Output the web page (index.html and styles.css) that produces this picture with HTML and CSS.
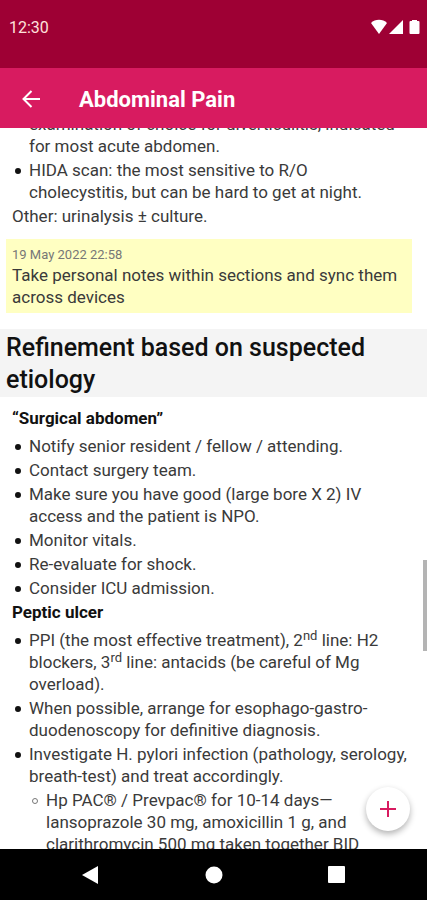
FILE: index.html
```html
<!DOCTYPE html>
<html lang="en">
<head>
<meta charset="utf-8">
<meta name="viewport" content="width=device-width, initial-scale=1">
<title>Abdominal Pain</title>
<link rel="stylesheet" href="styles.css">
</head>
<body>
<div class="status">
  <span>12:30</span>
  <svg width="49" height="16" viewBox="0 0 49 16" fill="#fff" aria-hidden="true">
    <path d="M0 4C4-.3 12-.3 16 4L8 15Z"/>
    <path d="M18 15 32 1V15Z"/>
    <path d="M41 1h5v1h1.500q1 0 1 1v11q0 1-1 1h-8q-1 0-1-1V3q0-1 1-1H41Z"/>
  </svg>
</div>
<header class="appbar">
  <button class="back" aria-label="Back">
    <svg width="20" height="20" viewBox="0 0 20 20" fill="none" stroke="#fff" stroke-width="2" aria-hidden="true"><path d="M19 9H3M10.500 1 2.500 9l8 8"/></svg>
  </button>
  <h1 class="title">Abdominal Pain</h1>
</header>
<main class="page">
  <div class="scroll">
    <div class="section section-first">
      <ul class="list">
        <li class="item item-continued">examination of choice for diverticulitis, indicated for most acute abdomen.</li>
        <li class="item">HIDA scan: the most sensitive to R/O cholecystitis, but can be hard to get at night.</li>
      </ul>
      <p class="text">Other: urinalysis ± culture.</p>
    </div>
    <aside class="note">
      <time class="date">19 May 2022 22:58</time>
      <p class="text">Take personal notes within sections and sync them across devices</p>
    </aside>
    <h2 class="heading">Refinement based on suspected etiology</h2>
    <div class="section">
      <h3 class="subheading">“Surgical abdomen”</h3>
      <ul class="list">
        <li class="item">Notify senior resident / fellow / attending.</li>
        <li class="item">Contact surgery team.</li>
        <li class="item">Make sure you have good (large bore X 2) IV access and the patient is NPO.</li>
        <li class="item">Monitor vitals.</li>
        <li class="item">Re-evaluate for shock.</li>
        <li class="item">Consider ICU admission.</li>
      </ul>
      <h3 class="subheading">Peptic ulcer</h3>
      <ul class="list">
        <li class="item">PPI (the most effective treatment), 2<sup>nd</sup> line: H2 blockers, 3<sup>rd</sup> line: antacids (be careful of Mg overload).</li>
        <li class="item">When possible, arrange for esophago-gastro-duodenoscopy for definitive diagnosis.</li>
        <li class="item">Investigate H. pylori infection (pathology, serology, breath-test) and treat accordingly.
          <ul class="list sublist">
            <li class="item">Hp PAC® / Prevpac® for 10-14 days—lansoprazole 30 mg, amoxicillin 1 g, and clarithromycin 500 mg taken together BID</li>
          </ul>
        </li>
      </ul>
    </div>
  </div>
  <div class="thumb"></div>
  <button class="add" aria-label="Add note">
    <svg width="16" height="16" viewBox="0 0 16 16" stroke="#d81b60" stroke-width="2" aria-hidden="true"><path d="M8 0v16M0 8h16"/></svg>
  </button>
</main>
<nav class="navbar">
  <button class="nav" aria-label="Back"><svg width="18" height="20" viewBox="0 0 18 20" fill="#fff" aria-hidden="true"><path d="M16 1v18L0 10Z"/></svg></button>
  <button class="nav" aria-label="Home"><svg width="18" height="18" viewBox="0 0 18 18" fill="#fff" aria-hidden="true"><circle cx="9" cy="9" r="8.500"/></svg></button>
  <button class="nav" aria-label="Recent apps"><svg width="18" height="18" viewBox="0 0 18 18" fill="#fff" aria-hidden="true"><rect width="17" height="17" rx="1"/></svg></button>
</nav>
</body>
</html>
```
FILE: styles.css
```css
*, *::before { box-sizing: border-box; }
body {
  margin: 0;
  height: 100vh;
  display: flex;
  flex-direction: column;
  background: #fff;
  color: #3a3a3a;
  font: 17px/22px Roboto, sans-serif;
}
h1, h2, h3, p, ul { margin: 0; padding: 0; }
button {
  padding: 0;
  border: 0;
  background: none;
  display: flex;
  align-items: center;
  justify-content: center;
}
.status {
  flex: none;
  display: flex;
  justify-content: space-between;
  align-items: flex-start;
  height: 68px;
  padding: 19px 7px 0 9px;
  background: #9e0034;
  color: #ffe0dc;
  font-size: 16px;
  line-height: 18px;
}
.appbar {
  flex: none;
  display: flex;
  align-items: center;
  gap: 38px;
  height: 60px;
  padding: 3px 21px 0;
  background: #d81b60;
  color: #fff;
}
.title { font-size: 22px; line-height: 28px; font-weight: 700; }
.page { flex: 1; min-height: 0; position: relative; overflow: hidden; }
.scroll { height: 100%; overflow: hidden; }
.section { padding: 10px 18px 0 12px; }
.section-first { padding-top: 0; margin-top: -15px; }
.list { padding-left: 17px; list-style: none; }
.item { margin-bottom: 2px; }
.item::before {
  content: "";
  display: inline-block;
  width: 6px;
  height: 6px;
  margin: 0 8px 0 -14px;
  border: 3px solid #111;
  border-radius: 50%;
  vertical-align: 2px;
}
.item-continued::before { content: none; }
.sublist { margin-top: 2px; }
.sublist .item::before { border: 1px solid #777; }
sup { font-size: 13px; line-height: 0; vertical-align: 6px; }
.note {
  margin: 12px 15px 16px 6px;
  padding: 7px 6px 5px;
  background: #ffffc2;
}
.date { display: block; font-size: 13px; line-height: 18px; color: #777; }
.heading {
  padding: 3px 6px 1px;
  background: #f4f4f4;
  color: #111;
  font-size: 25px;
  line-height: 32px;
  font-weight: 500;
}
.subheading {
  margin-bottom: 6px;
  color: #111;
  font-size: 17px;
  line-height: 22px;
  font-weight: 700;
}
.thumb {
  position: absolute;
  top: 432px;
  right: 0;
  width: 4px;
  height: 91px;
  background: #b4b4b4;
}
.add {
  position: absolute;
  right: 17px;
  bottom: 18px;
  width: 44px;
  height: 44px;
  border-radius: 50%;
  background: #fff;
  box-shadow: 0 3px 6px rgba(0, 0, 0, .3);
}
.navbar {
  flex: none;
  display: flex;
  justify-content: center;
  gap: 105px;
  height: 51px;
  background: #000;
}
```
